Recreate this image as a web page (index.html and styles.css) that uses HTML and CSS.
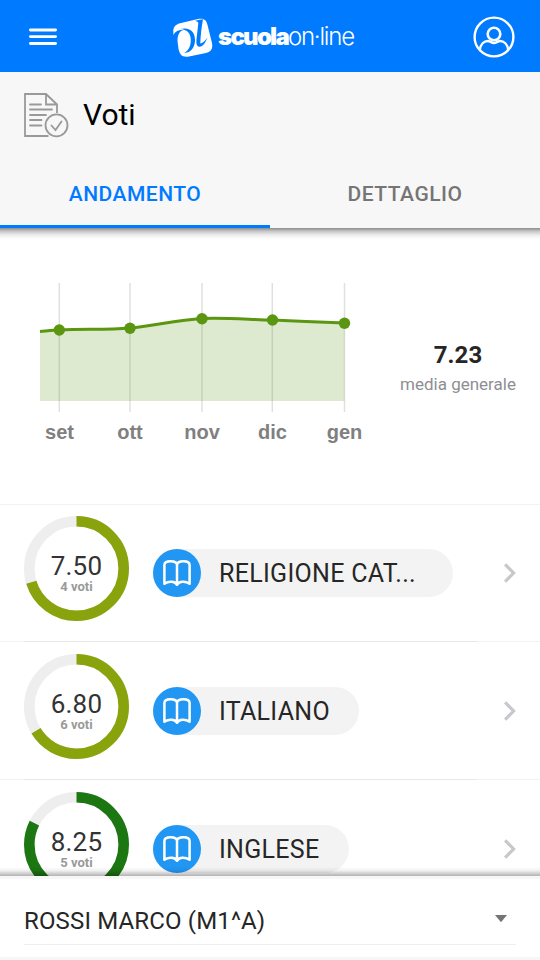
FILE: index.html
```html
<!DOCTYPE html>
<html lang="it">

<head>
    <meta charset="UTF-8">
    <meta name="viewport" content="width=device-width, initial-scale=1.0">
    <title>Voti - scuolaon-line</title>
    <link rel="stylesheet" href="styles.css">
</head>

<body>
    <svg class="defs" width="0" height="0">
        <symbol id="book" viewBox="0 0 28 28">
            <path fill="none" stroke="currentColor" stroke-width="2.5" stroke-linejoin="round"
                d="M14 25.800C12 22.300 6 21.800 1.400 24.800V6C1.400 2.500 4.500 2.200 7.500 2.200C11 2.200 14 2.800 14 6C14 2.800 17 2.200 20.500 2.200C23.500 2.200 26.600 2.500 26.600 6V24.800C22 21.800 16 22.300 14 25.800ZM14 5.500V25" />
        </symbol>
        <symbol id="chevron" viewBox="0 0 12 20">
            <path fill="none" stroke="currentColor" stroke-width="3.2" d="M1.1 1.4L9.6 10L1.1 18.6" />
        </symbol>
    </svg>

    <header class="topbar">
        <button class="icon-btn" aria-label="Menu">
            <svg width="28" height="18" viewBox="0 0 28 18">
                <path stroke="currentColor" stroke-width="2.8" stroke-linecap="round" d="M1.4 2H26.6M1.4 8.6H26.6M1.4 15.5H26.6" />
            </svg>
        </button>
        <div class="logo">
            <svg width="40" height="40" viewBox="0 0 40 40">
                <path fill="#fff"
                    d="M.5 17C-.2 11 .5 7.500 6 5.500L26 .8C31 0 33.500 2 34.500 7L39 25C40 31 38 33.500 33 35L16 38.500C9 39.500 7 37 5.500 31L4.500 23C4.500 16 7 12.800 10.500 12C6 11.500 2 13 .5 17Z" />
                <path fill="#007aff" d="M7 11C17 8.500 22.500 14 22 23C21.500 30 17 35.500 11 34.800C15.500 33 17.800 28 17.800 22C17.800 15 14 11.500 7 11Z" />
                <path fill="#007aff" d="M22 2.800C26 2 28 1.500 30 1.200C28.500 9 27.500 18 27.300 25.500C29.500 25.500 32 23 34.500 19.500C32 26 29 29.500 25.500 28.500C22.800 27.500 23.200 23 24 17L25.300 5C25 4 24 3.500 22 2.800Z" />
            </svg>
            <span class="logo-text"><b>scuola</b><i>on·line</i></span>
        </div>
        <button class="icon-btn" aria-label="Profilo">
            <svg width="42" height="42" viewBox="0 0 42 42" fill="none" stroke="currentColor" stroke-width="2.4">
                <circle cx="21" cy="21" r="19.400" />
                <circle cx="21" cy="18" r="6.300" stroke-width="2.600" />
                <path d="M6.800 34C7.500 28 11 25 15 25C17 25 18.500 27 21 27C23.500 27 25 25 27 25C31 25 34.500 28 35.200 34" />
            </svg>
        </button>
    </header>

    <section class="page-head">
        <div class="page-title">
            <svg width="45" height="45" viewBox="0 0 45 45" fill="none" stroke="#999" stroke-width="1.800">
                <path d="M24.500 43H1V1H22L33 11.500V20M22 1V11.500H33" />
                <path stroke-linecap="round" d="M6 11.500H17M6 16.500H28M6 22H22M6 27H17.500M6 32.500H17.500" />
                <circle cx="32.500" cy="32.300" r="11" />
                <path stroke-linecap="round" d="M27.500 32.500L31.500 37L37.500 28.500" />
            </svg>
            <h1>Voti</h1>
        </div>
        <nav class="tabs">
            <a class="tab active" href="#">ANDAMENTO</a>
            <a class="tab" href="#">DETTAGLIO</a>
        </nav>
    </section>

    <main class="content">
        <section class="summary">
            <svg class="chart" width="352" height="180" viewBox="24 270 352 180">
                <path class="chart-grid" d="M59.300 283V412M130 283V412M202 283V412M272.300 283V412M344.500 283V412" />
                <path class="chart-area" d="M40 331.500C46 331 53 330 59.300 330C83 328.700 106 330 130 328C154 325.500 178 320 202 318.500C225 317.500 249 319.500 272.300 320C296 321 321 322 344.500 323V401H40Z" />
                <path class="chart-line" d="M40 331.500C46 331 53 330 59.300 330C83 328.700 106 330 130 328C154 325.500 178 320 202 318.500C225 317.500 249 319.500 272.300 320C296 321 321 322 344.500 323" />
                <g class="chart-dots">
                    <circle cx="59.300" cy="330" r="5.700" />
                    <circle cx="130" cy="328.300" r="5.700" />
                    <circle cx="202" cy="318.800" r="5.700" />
                    <circle cx="272.500" cy="320" r="5.700" />
                    <circle cx="344.500" cy="323.200" r="5.700" />
                </g>
                <g class="chart-labels">
                    <text x="59.500" y="439">set</text>
                    <text x="130" y="439">ott</text>
                    <text x="202" y="439">nov</text>
                    <text x="272.500" y="439">dic</text>
                    <text x="344.500" y="439">gen</text>
                </g>
            </svg>
            <div class="average">
                <strong>7.23</strong>
                <span>media generale</span>
            </div>
        </section>

        <ul class="subjects">
            <li class="subject">
                <div class="donut">
                    <svg width="105" height="105" viewBox="0 0 105 105">
                        <circle class="track" cx="52.500" cy="52.500" r="47.200" />
                        <circle class="value" cx="52.500" cy="52.500" r="47.200" pathLength="100" stroke-dasharray="70.300 100" />
                    </svg>
                    <div class="donut-text"><strong>7.50</strong><span>4 voti</span></div>
                </div>
                <div class="chip chip-full">
                    <span class="chip-icon"><svg width="28" height="28"><use href="#book" /></svg></span>
                    <span class="chip-label">RELIGIONE CAT...</span>
                </div>
                <svg class="chevron" width="12" height="20"><use href="#chevron" /></svg>
            </li>
            <li class="subject">
                <div class="donut">
                    <svg width="105" height="105" viewBox="0 0 105 105">
                        <circle class="track" cx="52.500" cy="52.500" r="47.200" />
                        <circle class="value" cx="52.500" cy="52.500" r="47.200" pathLength="100" stroke-dasharray="66.400 100" />
                    </svg>
                    <div class="donut-text"><strong>6.80</strong><span>6 voti</span></div>
                </div>
                <div class="chip">
                    <span class="chip-icon"><svg width="28" height="28"><use href="#book" /></svg></span>
                    <span class="chip-label">ITALIANO</span>
                </div>
                <svg class="chevron" width="12" height="20"><use href="#chevron" /></svg>
            </li>
            <li class="subject">
                <div class="donut high">
                    <svg width="105" height="105" viewBox="0 0 105 105">
                        <circle class="track" cx="52.500" cy="52.500" r="47.200" />
                        <circle class="value" cx="52.500" cy="52.500" r="47.200" pathLength="100" stroke-dasharray="82.500 100" />
                    </svg>
                    <div class="donut-text"><strong>8.25</strong><span>5 voti</span></div>
                </div>
                <div class="chip">
                    <span class="chip-icon"><svg width="28" height="28"><use href="#book" /></svg></span>
                    <span class="chip-label">INGLESE</span>
                </div>
                <svg class="chevron" width="12" height="20"><use href="#chevron" /></svg>
            </li>
        </ul>
    </main>

    <footer class="student">
        <div class="student-select">
            <span>ROSSI MARCO (M1^A)</span>
            <svg width="12" height="8" viewBox="0 0 12 8"><path fill="#757575" d="M0 0H12L6 7.300Z" /></svg>
        </div>
    </footer>
</body>

</html>
```
FILE: styles.css
```css
:root {
    --blue: #007aff;
    --chip-blue: #2196f3;
    --bar-bg: #f7f7f7;
    --text: #262626;
    --olive: #88a30b;
    --green: #1c7611;
}

* {
    margin: 0;
    padding: 0;
    box-sizing: border-box;
}

body {
    height: 100vh;
    display: flex;
    flex-direction: column;
    overflow: hidden;
    background: #fff;
    color: var(--text);
    font-family: Roboto, "Liberation Sans", sans-serif;
}

svg {
    display: block;
    flex-shrink: 0;
}

.defs {
    position: absolute;
}

.topbar {
    height: 72px;
    padding: 2px 25px 0 29px;
    flex-shrink: 0;
    display: flex;
    align-items: center;
    justify-content: space-between;
    background: var(--blue);
    color: #fff;
}

.icon-btn {
    border: none;
    background: none;
    color: inherit;
}

.logo {
    display: flex;
    align-items: center;
    gap: 5px;
    margin: 2px 3px 0 0;
}

.logo-text {
    margin-top: -3px;
    font-family: Inter, sans-serif;
    font-size: 24px;
    line-height: 28px;
    white-space: nowrap;
}

.logo-text b {
    font-weight: 900;
    letter-spacing: -1.8px;
}

.logo-text i {
    font-style: normal;
    font-weight: 300;
    letter-spacing: -1.2px;
}

/* title + tabs */
.page-head {
    position: relative;
    z-index: 1;
    height: 156px;
    flex-shrink: 0;
    background: var(--bar-bg);
}

.page-head::after {
    content: '';
    position: absolute;
    top: 100%;
    left: 0;
    width: 100%;
    height: 11px;
    background: linear-gradient(rgba(0, 0, 0, 0.45), rgba(0, 0, 0, 0.22) 30%, rgba(0, 0, 0, 0.07) 65%, transparent);
}

.page-title {
    height: 87px;
    padding: 0 24px;
    display: flex;
    align-items: center;
    gap: 14px;
}

.page-title h1 {
    margin-top: -2px;
    color: #000;
    font-size: 30px;
    font-weight: 400;
}

.tabs {
    height: 69px;
    display: flex;
}

.tab {
    flex: 1;
    padding-top: 22px;
    text-align: center;
    text-decoration: none;
    color: #757575;
    font-size: 21px;
    font-weight: 500;
    line-height: 26px;
    letter-spacing: 0.5px;
    border-bottom: 3px solid transparent;
}

.tab.active {
    color: var(--blue);
    border-color: var(--blue);
}

.content {
    flex: 1;
    min-height: 0;
    overflow: hidden;
}

.summary {
    height: 276px;
    padding: 42px 24px 0;
    display: flex;
}

.chart-grid {
    stroke: #000;
    stroke-opacity: 0.12;
    stroke-width: 1.5;
}

.chart-area {
    fill: #5a960f;
    fill-opacity: 0.2;
}

.chart-line {
    fill: none;
    stroke: #5a960f;
    stroke-width: 3;
}

.chart-dots {
    fill: #5a960f;
}

.chart-labels {
    fill: #808080;
    font: bold 20px "Liberation Sans", sans-serif;
    text-anchor: middle;
}

.average {
    flex: 1;
    margin: 70px -4px 0 20px;
    display: flex;
    flex-direction: column;
    align-items: center;
    white-space: nowrap;
}

.average strong {
    font-size: 24px;
    font-weight: 700;
    line-height: 30px;
    letter-spacing: 0.1px;
}

.average span {
    color: #8e8e93;
    font-size: 17px;
    line-height: 28px;
}

.subjects {
    list-style: none;
}

.subject {
    position: relative;
    height: 138px;
    padding: 12px 24px 0;
    display: flex;
    border-bottom: 1px solid #f2f2f2;
}

.subject:first-child {
    padding-top: 11px;
    border-top: 1px solid #f2f2f2;
}

/* darker inset part of the divider */
.subject::after {
    content: '';
    position: absolute;
    left: 24px;
    right: 63px;
    bottom: -1px;
    height: 1px;
    background: #e8e8e8;
}

.donut {
    display: grid;
    width: 105px;
    height: 105px;
    color: var(--olive);
}

.donut.high {
    color: var(--green);
}

.donut > * {
    grid-area: 1 / 1;
}

.donut circle {
    fill: none;
    stroke-width: 10.6;
}

.donut .track {
    stroke: #eee;
}

.donut .value {
    stroke: currentColor;
    transform: rotate(-90deg);
    transform-origin: center;
}

.donut-text {
    padding-top: 36px;
    display: flex;
    flex-direction: column;
    align-items: center;
}

.donut-text strong {
    color: #333;
    font-size: 26px;
    font-weight: 400;
    line-height: 28px;
    letter-spacing: 0.2px;
}

.donut-text span {
    color: #999;
    font-size: 13px;
    font-weight: 700;
    line-height: 13px;
}

.chip {
    height: 48px;
    margin: 33px auto 0 24px;
    padding-right: 29px;
    display: flex;
    align-items: center;
    border-radius: 24px;
    background: #f3f3f3;
}

.chip-full {
    width: 300px;
}

.chip-icon {
    width: 48px;
    height: 48px;
    flex-shrink: 0;
    display: flex;
    align-items: center;
    justify-content: center;
    border-radius: 50%;
    background: var(--chip-blue);
    color: #fff;
}

.chip-label {
    margin-left: 18px;
    font-size: 25px;
    font-weight: 400;
    letter-spacing: 0.3px;
    white-space: nowrap;
}

.chevron {
    margin-top: 47px;
    color: #c7c7cc;
}

.student {
    position: relative;
    height: 84px;
    padding: 0 24px;
    flex-shrink: 0;
    background: #fff;
    border-top: 3px solid var(--bar-bg);
    border-bottom: 3px solid var(--bar-bg);
}

.student::before {
    content: '';
    position: absolute;
    bottom: calc(100% + 3px);
    left: 0;
    width: 100%;
    height: 9px;
    background: linear-gradient(transparent, rgba(0, 0, 0, 0.06) 40%, rgba(0, 0, 0, 0.3));
}

.student-select {
    height: 66px;
    padding: 16px 9px 0 0;
    display: flex;
    align-items: center;
    justify-content: space-between;
    border-bottom: 1px solid #efefef;
    font-size: 24px;
    letter-spacing: 0.15px;
}

.student-select span {
    margin-top: 2px;
}

.student-select svg {
    margin-top: -2px;
}
```
